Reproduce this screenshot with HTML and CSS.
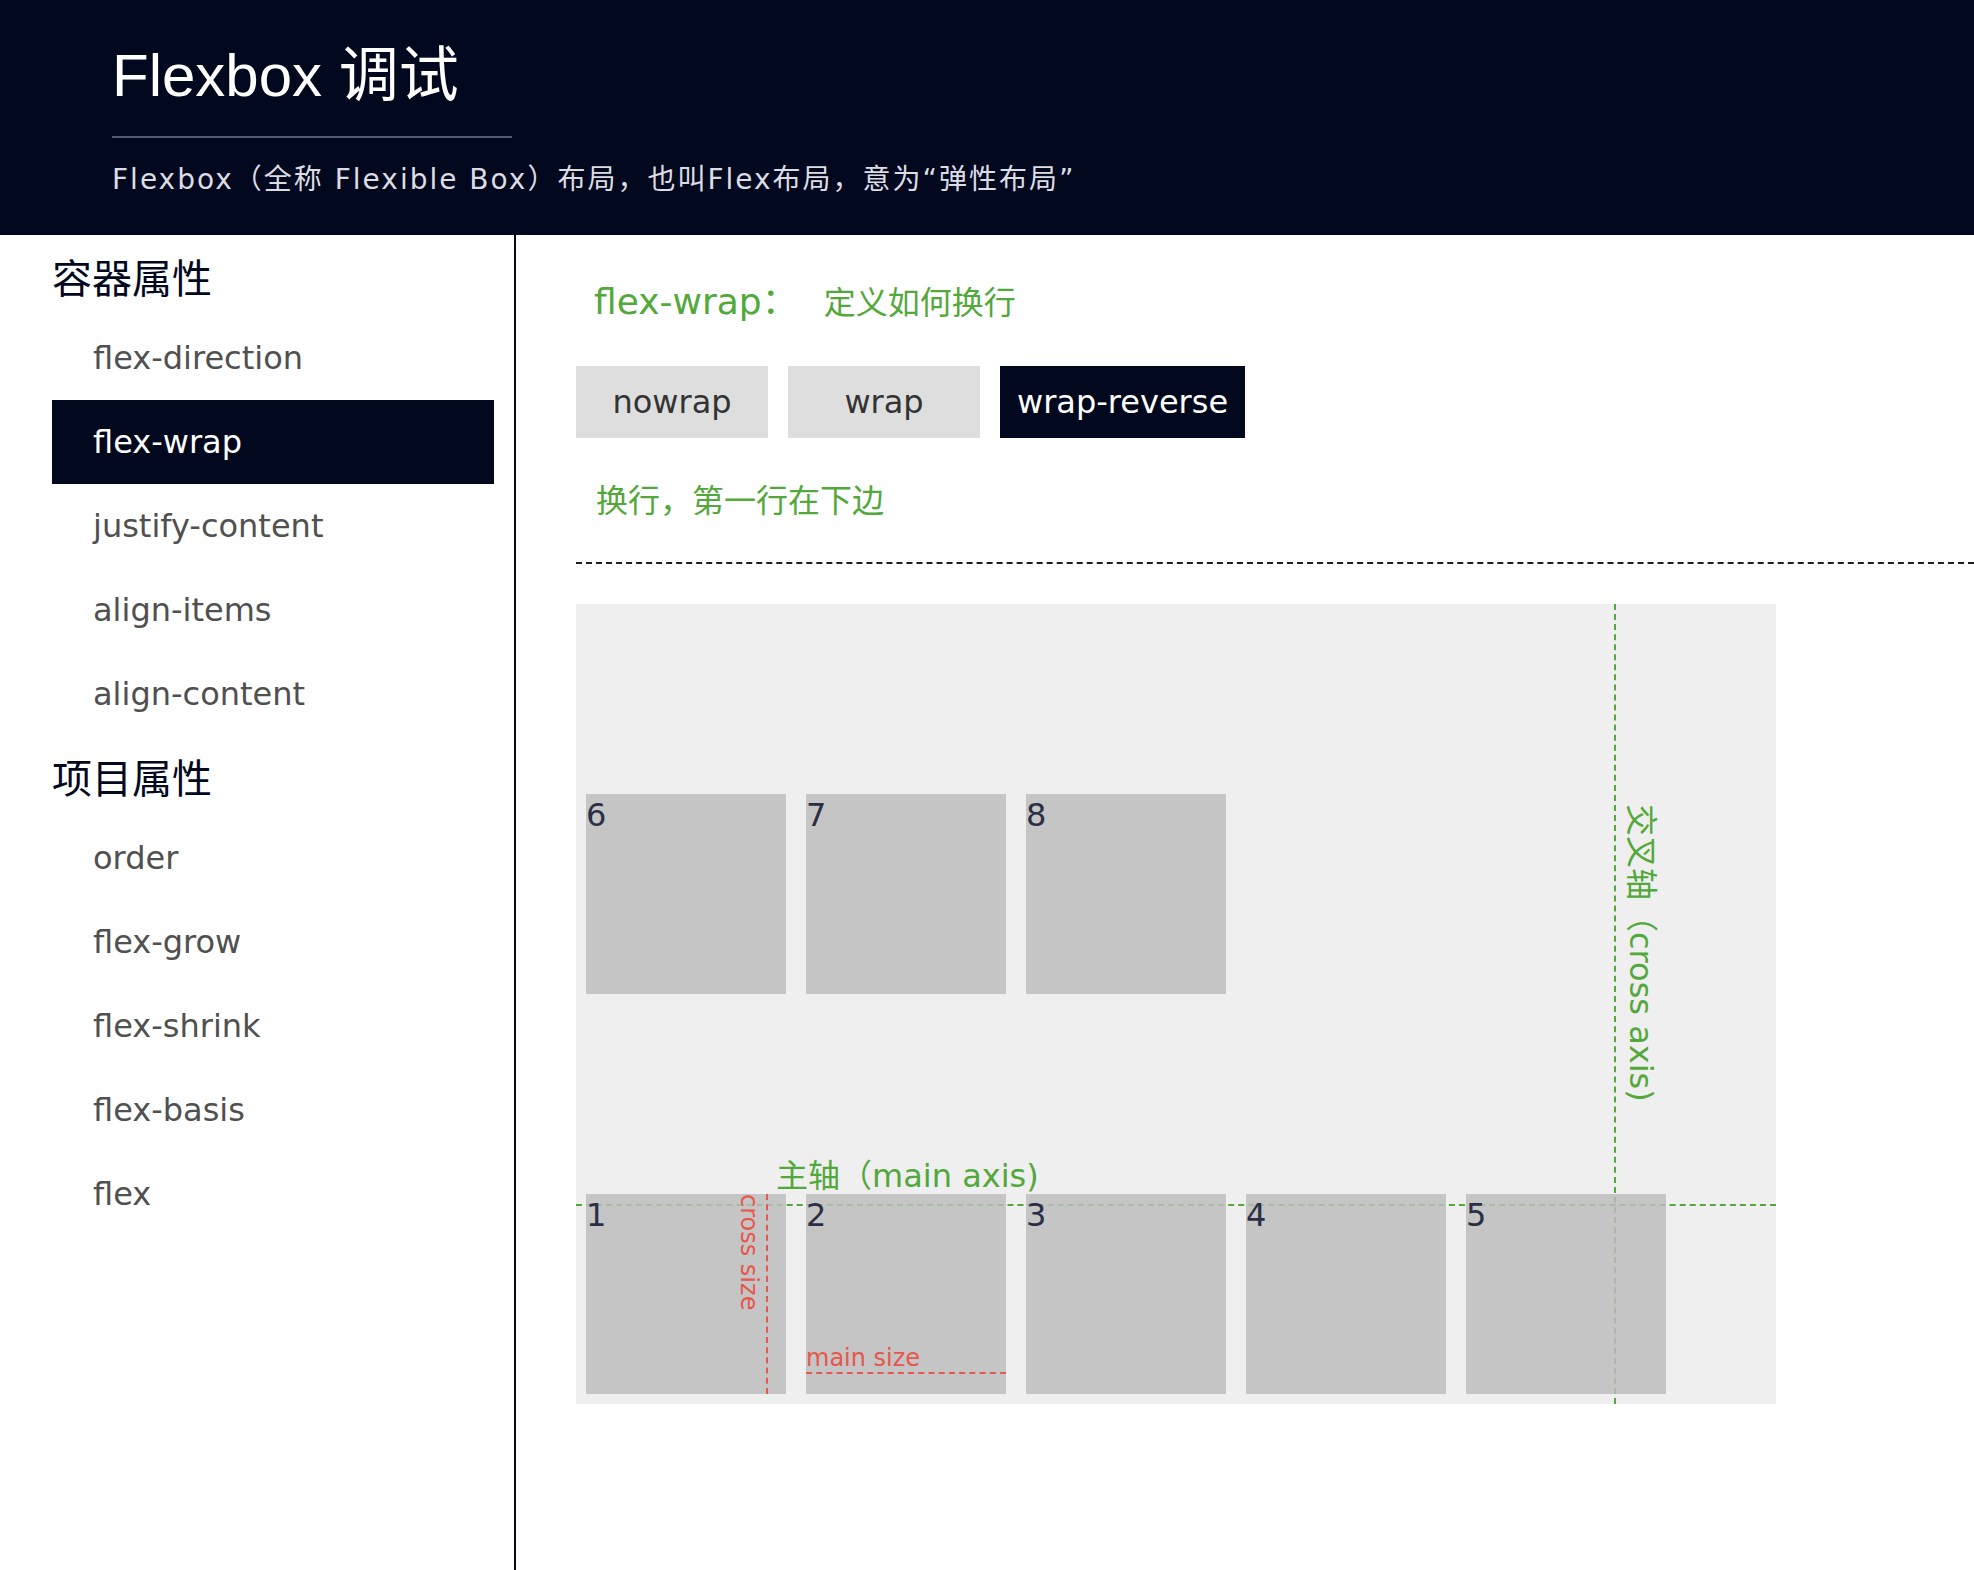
FILE: index.html
```html
<!DOCTYPE html>
<html lang="zh-CN">
<head>
<meta charset="utf-8">
<title>Flexbox 调试</title>
<link rel="stylesheet" href="styles.css">
</head>
<body>
<header class="site-header">
  <h1 class="site-title">Flexbox 调试</h1>
  <div class="title-rule"></div>
  <p class="site-sub">Flexbox（全称 Flexible Box）布局，也叫Flex布局，意为“弹性布局”</p>
</header>
<div class="layout">
  <nav class="sidebar">
    <h2 class="group-title">容器属性</h2>
    <ul class="menu">
      <li class="menu-item">flex-direction</li>
      <li class="menu-item active">flex-wrap</li>
      <li class="menu-item">justify-content</li>
      <li class="menu-item">align-items</li>
      <li class="menu-item">align-content</li>
    </ul>
    <h2 class="group-title">项目属性</h2>
    <ul class="menu">
      <li class="menu-item">order</li>
      <li class="menu-item">flex-grow</li>
      <li class="menu-item">flex-shrink</li>
      <li class="menu-item">flex-basis</li>
      <li class="menu-item">flex</li>
    </ul>
  </nav>
  <main class="content">
    <h3 class="prop-title">flex-wrap：<span class="prop-desc">定义如何换行</span></h3>
    <div class="options">
      <button class="opt">nowrap</button>
      <button class="opt">wrap</button>
      <button class="opt active">wrap-reverse</button>
    </div>
    <p class="opt-note">换行，第一行在下边</p>
    <hr class="divider">
    <div class="demo">
      <div class="axis-main"></div>
      <div class="axis-cross"></div>
      <div class="item">1<span class="size-line-v"></span><span class="size-label cross">cross size</span></div>
      <div class="item">2<span class="size-line-h"></span><span class="size-label main">main size</span></div>
      <div class="item">3</div>
      <div class="item">4</div>
      <div class="item">5</div>
      <div class="item">6</div>
      <div class="item">7</div>
      <div class="item">8</div>
      <span class="axis-label main">主轴（main axis)</span>
      <span class="axis-label cross">交叉轴（cross axis)</span>
    </div>
  </main>
</div>
</body>
</html>
```
FILE: styles.css
```css
* { box-sizing: border-box; }
html, body { margin: 0; padding: 0; }
body {
  font-family: "DejaVu Sans", "Noto Sans CJK SC", sans-serif;
  color: #333;
  background: #fff;
}

/* header */
.site-header {
  height: 235px;
  background: #02081e;
  padding: 41px 0 0 112px;
}
.site-title {
  margin: 0;
  font-family: "Liberation Sans", "Noto Sans CJK SC", sans-serif;
  font-size: 60px;
  line-height: 70px;
  font-weight: normal;
  color: #fff;
}
.title-rule {
  width: 400px;
  height: 2px;
  background: #555a6e;
  margin-top: 25px;
}
.site-sub {
  margin: 22px 0 0;
  font-size: 28px;
  line-height: 40px;
  letter-spacing: 2px;
  color: #dcdde3;
}

/* layout */
.layout {
  display: flex;
  min-height: calc(100vh - 235px);
}
.sidebar {
  width: 516px;
  flex: none;
  border-right: 2px solid #02081e;
  padding: 1px 20px 0 52px;
}
.group-title {
  margin: 0;
  height: 80px;
  font-family: "Noto Sans CJK SC", sans-serif;
  font-size: 40px;
  line-height: 80px;
  font-weight: normal;
  color: #02081e;
}
.menu { list-style: none; margin: 0; padding: 0; }
.menu-item {
  height: 84px;
  line-height: 84px;
  padding-left: 41px;
  font-size: 32px;
  color: #505050;
}
.menu-item.active { background: #02081e; color: #fff; }

/* content */
.content {
  flex: 1;
  min-width: 0;
  padding: 42px 0 0 60px;
}
.prop-title {
  margin: 0;
  height: 50px;
  padding-left: 18px;
  font-size: 36px;
  line-height: 50px;
  font-weight: normal;
  color: #53a83b;
}
.prop-desc { font-size: 32px; line-height: 1; margin-left: 26px; }
.options {
  display: flex;
  gap: 20px;
  margin-top: 39px;
}
.opt {
  min-width: 192px;
  height: 72px;
  padding: 0 17px;
  border: 0;
  background: #dedede;
  font-family: inherit;
  font-size: 32px;
  line-height: 72px;
  color: #333;
}
.opt.active { background: #02081e; color: #fff; }
.opt-note {
  margin: 38px 0 0;
  height: 50px;
  padding-left: 20px;
  font-size: 32px;
  line-height: 50px;
  color: #53a83b;
}
.divider {
  margin: 36px 0 0;
  height: 0;
  border: 0;
  border-top: 2px dashed #1e1e1e;
}

/* demo */
.demo {
  position: relative;
  width: 1200px;
  height: 800px;
  margin-top: 40px;
  background: #efefef;
  display: flex;
  flex-wrap: wrap-reverse;
}
.item {
  position: relative;
  flex: none;
  width: 200px;
  height: 200px;
  margin: 10px;
  background: rgba(188, 188, 188, 0.83);
  font-size: 32px;
  line-height: 42px;
  color: #2a2f45;
}
.axis-main {
  position: absolute;
  left: 0;
  right: 0;
  top: 600px;
  border-top: 2px dashed #53a83b;
}
.axis-cross {
  position: absolute;
  top: 0;
  bottom: 0;
  left: 1038px;
  border-left: 2px dashed #53a83b;
}
.axis-label {
  position: absolute;
  font-size: 32px;
  line-height: 40px;
  color: #53a83b;
  white-space: nowrap;
}
.axis-label.main { left: 200px; top: 552px; }
.axis-label.cross {
  left: 1085px;
  top: 200px;
  transform-origin: 0 0;
  transform: rotate(90deg);
}
.size-line-v {
  position: absolute;
  top: 0;
  bottom: 0;
  right: 18px;
  border-left: 2px dashed #e6574c;
}
.size-line-h {
  position: absolute;
  left: 0;
  right: 0;
  top: 178px;
  border-top: 2px dashed #e6574c;
}
.size-label {
  position: absolute;
  font-size: 24px;
  line-height: 28px;
  color: #e6574c;
  white-space: nowrap;
}
.size-label.cross {
  left: 177px;
  top: 0;
  transform-origin: 0 0;
  transform: rotate(90deg);
}
.size-label.main { left: 0; top: 150px; }
```
